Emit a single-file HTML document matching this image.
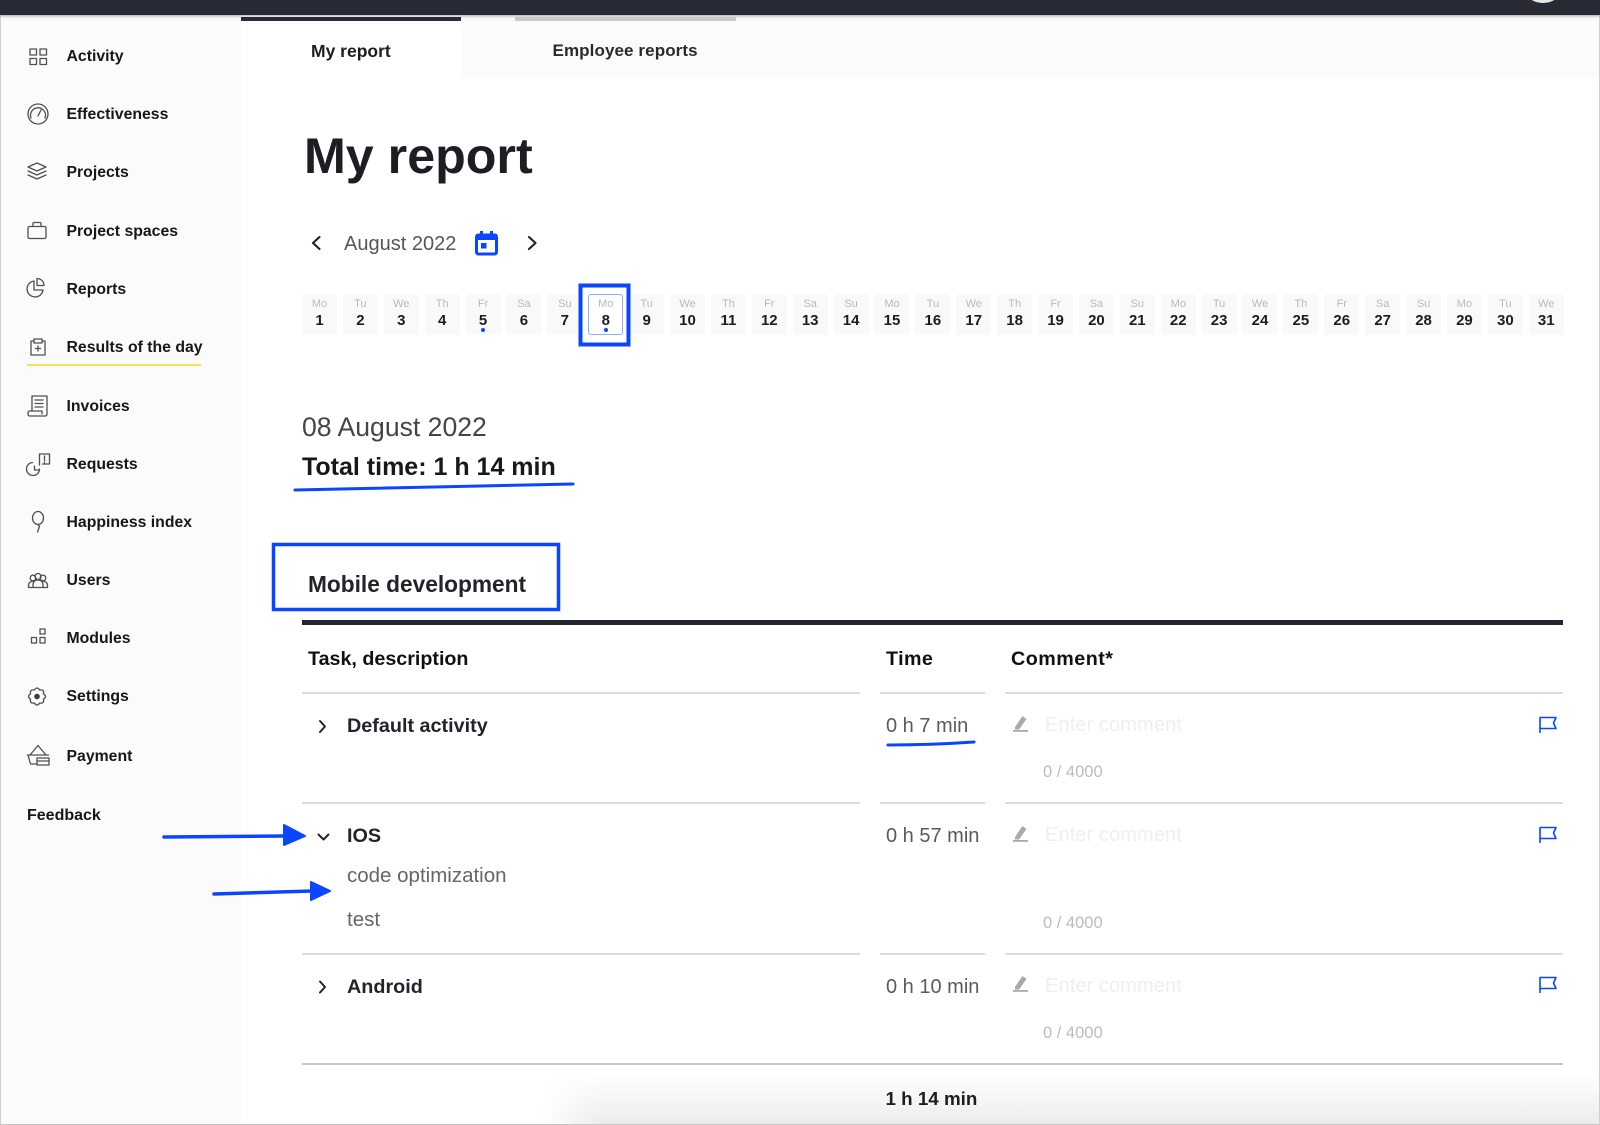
<!DOCTYPE html>
<html lang="en"><head><meta charset="utf-8"><title>My report</title>
<style>
*{box-sizing:border-box}
html,body{margin:0;padding:0;width:1600px;height:1125px;overflow:hidden;background:#fff;font-family:"Liberation Sans",sans-serif;color:#1c1d22}
.a{position:absolute;white-space:nowrap;height:24px;line-height:24px}
.b{font-weight:bold}
.box{position:absolute}
.nav{left:66.5px;font-size:15.8px;font-weight:bold;color:#16171b;margin-top:2px}
.ln{position:absolute;height:2px;background:#dcdcdc}
.th{font-size:19.7px;font-weight:bold;color:#111;margin-top:1px}
.tn{font-size:19.8px;font-weight:bold;color:#23242b;left:347px}
.tm{font-size:20px;color:#5a5a5e;left:886px}
.ec{font-size:20.2px;color:#efefef;left:1045px}
.cn{font-size:16.5px;color:#bcbcbc;left:1043px}
.sub{font-size:20.5px;color:#66666a;left:347px;margin-top:1px}
#cal{position:absolute;left:302px;top:294px;display:flex;gap:5.9px}
#cal div{position:relative;width:35px;height:41px;background:#f9f9f9;border-radius:3px;text-align:center}
#cal i{display:block;font-style:normal;font-size:11px;line-height:12px;color:#b9b9b9;padding-top:4px}
#cal b{display:block;font-size:15px;line-height:17px;color:#1c1d22;margin-top:2px}
#cal u{position:absolute;left:15.5px;top:34px;width:4px;height:4px;border-radius:50%;background:#0a46ff}
#cal .s{background:#fff;border:1px solid #8fabff}
#cal .s i{padding-top:3px}
#cal .s u{left:14.5px;top:33px}
</style></head>
<body>
<div class="box" style="left:0;top:15px;width:241px;height:1110px;background:#fbfbfb"></div>
<div class="box" style="left:461px;top:15px;width:1139px;height:63px;background:#fbfbfb"></div>
<div class="box" style="left:0;top:0;width:1px;height:1125px;background:#cfcfcf"></div>
<div class="box" style="left:540px;top:1072px;width:1060px;height:53px;background:linear-gradient(#fff,#ececec);-webkit-mask-image:linear-gradient(90deg,transparent,#000 60px)"></div>
<div class="box" style="left:0;top:1124px;width:1600px;height:1px;background:#c4c4c4"></div>
<div class="box" style="left:1599px;top:15px;width:1px;height:1110px;background:#d0d0d0"></div>
<div class="box" style="left:0;top:0;width:1600px;height:15px;background:#282b36;box-shadow:0 1px 3px rgba(0,0,0,.35)"></div>
<div class="box" style="left:1529px;top:-12px;width:28px;height:15px;border-radius:50%;background:#e6e6e6"></div>
<div class="box" style="left:241px;top:17px;width:220px;height:4px;background:#282b36"></div>
<div class="box" style="left:515px;top:17px;width:221px;height:4px;background:#c9c9c9"></div>

<div class="a" style="left:311px;top:39px;font-size:17.5px;font-weight:bold;color:#1c1d22">My report</div>
<div class="a" style="left:552.500px;top:39px;font-size:17px;font-weight:bold;color:#2a2b30;letter-spacing:.1px">Employee reports</div>

<div class="a nav" style="top:43px">Activity</div>
<div class="a nav" style="top:101px">Effectiveness</div>
<div class="a nav" style="top:159px">Projects</div>
<div class="a nav" style="top:218px">Project spaces</div>
<div class="a nav" style="top:276px">Reports</div>
<div class="a nav" style="top:334px">Results of the day</div>
<div class="a nav" style="top:393px">Invoices</div>
<div class="a nav" style="top:451px">Requests</div>
<div class="a nav" style="top:509px">Happiness index</div>
<div class="a nav" style="top:567px">Users</div>
<div class="a nav" style="top:625px">Modules</div>
<div class="a nav" style="top:683px">Settings</div>
<div class="a nav" style="top:743px">Payment</div>
<div class="a nav" style="top:802px;left:27px;font-size:16px">Feedback</div>
<div class="box" style="left:27px;top:364px;width:174px;height:2px;background:#ffe14f"></div>

<div class="a b" style="left:304px;top:131px;height:50px;line-height:50px;font-size:50.200px;color:#1d1e23">My report</div>
<div class="a" style="left:344px;top:232px;font-size:20px;color:#55565a">August 2022</div>

<div id="cal">
<div><i>Mo</i><b>1</b></div><div><i>Tu</i><b>2</b></div><div><i>We</i><b>3</b></div><div><i>Th</i><b>4</b></div><div><i>Fr</i><b>5</b><u></u></div><div><i>Sa</i><b>6</b></div><div><i>Su</i><b>7</b></div>
<div class="s"><i>Mo</i><b>8</b><u></u></div><div><i>Tu</i><b>9</b></div><div><i>We</i><b>10</b></div><div><i>Th</i><b>11</b></div><div><i>Fr</i><b>12</b></div><div><i>Sa</i><b>13</b></div><div><i>Su</i><b>14</b></div>
<div><i>Mo</i><b>15</b></div><div><i>Tu</i><b>16</b></div><div><i>We</i><b>17</b></div><div><i>Th</i><b>18</b></div><div><i>Fr</i><b>19</b></div><div><i>Sa</i><b>20</b></div><div><i>Su</i><b>21</b></div>
<div><i>Mo</i><b>22</b></div><div><i>Tu</i><b>23</b></div><div><i>We</i><b>24</b></div><div><i>Th</i><b>25</b></div><div><i>Fr</i><b>26</b></div><div><i>Sa</i><b>27</b></div><div><i>Su</i><b>28</b></div>
<div><i>Mo</i><b>29</b></div><div><i>Tu</i><b>30</b></div><div><i>We</i><b>31</b></div>
</div>

<div class="a" style="left:302px;top:415px;font-size:26.600px;color:#444549">08 August 2022</div>
<div class="a b" style="left:302px;top:454.500px;font-size:25px;color:#17181c">Total time: 1 h 14 min</div>
<div class="a b" style="left:308px;top:572px;font-size:22.700px;color:#23242a">Mobile development</div>

<div class="box" style="left:302px;top:620px;width:1261px;height:5px;background:#23252e"></div>
<div class="a th" style="left:308px;top:646px">Task, description</div>
<div class="a th" style="left:886px;top:646px;letter-spacing:.4px">Time</div>
<div class="a th" style="left:1011px;top:646px;letter-spacing:.5px">Comment*</div>

<div class="ln" style="left:302px;top:692px;width:558px"></div>
<div class="ln" style="left:880px;top:692px;width:105px"></div>
<div class="ln" style="left:1005px;top:692px;width:558px"></div>
<div class="ln" style="left:302px;top:802px;width:558px"></div>
<div class="ln" style="left:880px;top:802px;width:105px"></div>
<div class="ln" style="left:1005px;top:802px;width:558px"></div>
<div class="ln" style="left:302px;top:953px;width:558px"></div>
<div class="ln" style="left:880px;top:953px;width:105px"></div>
<div class="ln" style="left:1005px;top:953px;width:558px"></div>
<div class="ln" style="left:302px;top:1063px;width:1261px;background:#c8c8c8"></div>

<div class="a tn" style="top:714px">Default activity</div>
<div class="a tm" style="top:714px">0 h 7 min</div>
<div class="a ec" style="top:713px">Enter comment</div>
<div class="a cn" style="top:760px">0 / 4000</div>

<div class="a tn" style="top:824px">IOS</div>
<div class="a tm" style="top:824px">0 h 57 min</div>
<div class="a ec" style="top:823px">Enter comment</div>
<div class="a cn" style="top:911px">0 / 4000</div>
<div class="a sub" style="top:863px">code optimization</div>
<div class="a sub" style="top:907px">test</div>

<div class="a tn" style="top:975px">Android</div>
<div class="a tm" style="top:975px">0 h 10 min</div>
<div class="a ec" style="top:974px">Enter comment</div>
<div class="a cn" style="top:1021px">0 / 4000</div>
<div class="a b" style="left:885.500px;top:1087px;font-size:18.800px;color:#1c1d22">1 h 14 min</div>

<svg class="box" style="left:0;top:0" width="1600" height="1125" viewBox="0 0 1600 1125" fill="none">
<g stroke="#4e4f54" stroke-width="1.300" stroke-linejoin="round" stroke-linecap="round">
<rect x="30" y="49" width="6.500" height="6"/><rect x="40" y="49" width="6.500" height="6"/><rect x="30" y="58.500" width="6.500" height="6"/><rect x="40" y="58.500" width="6.500" height="6"/>
<circle cx="38" cy="114" r="10"/><path d="M31 118a7.500 7.500 0 1 1 14 0M38 116l3-6"/>
<path d="M37 163l9 4-9 4-9-4zM28 171l9 4 9-4M28 175l9 4 9-4"/>
<rect x="28" y="226.500" width="18" height="12" rx="1.500"/><path d="M33 226v-2.500q0-1 1-1h6q1 0 1 1v2.500"/>
<path d="M34 281a8 8 0 1 0 9 9h-9zM37 278.500a7 7 0 0 1 7 7h-7z"/>
<g transform="translate(0,-2)"><path d="M34 343h-3v14h14v-14h-3M34 341h8v4h-8zM38 348v5M35.500 350.500h5"/></g>
<path d="M32 411v-15h15v18q0 2-2 2H30q-2 0-2-2v-1q0-2 2-2h12v3M35 400h8M35 403.500h8M35 407h8"/>
<g transform="translate(1.500,0)"><path d="M38 469a6.500 6.500 0 1 1-7-6.500M33 466v4h4M38 465v-11h10v10h-7"/><path d="M43 456v5M43 462.500v.5"/></g>
<ellipse cx="38" cy="518" rx="5.500" ry="6.500"/><path d="M38 524.500l1.500 2-2 5.500"/>
<path d="M28.500 587.500v-2q0-4 5-4.500M47.500 587.500v-2q0-4-5-4.500M28.500 587.500h19M33 587v-2q0-5 5-5t5 5v2"/><circle cx="33" cy="578" r="2.800"/><circle cx="38" cy="576.500" r="3"/><circle cx="43" cy="578" r="2.800"/>
<rect x="31.500" y="637.500" width="5" height="5.500"/><rect x="40" y="637.500" width="5" height="5.500"/><rect x="40" y="629" width="5" height="5"/>
<path d="M43.470 693.820Q47.500 696.500 43.470 699.180Q44.400 703.900 39.680 702.970Q37 707 34.320 702.970Q29.600 703.900 30.530 699.180Q26.500 696.500 30.530 693.820Q29.600 689.100 34.320 690.030Q37 686 39.680 690.030Q44.400 689.100 43.470 693.820Z"/>
<path d="M30 755l8-9.500 8 9.500M27.500 755h21M28 755l2.500 9H37"/><rect x="37" y="758" width="12" height="7"/><path d="M37 761h12"/>
</g>
<circle cx="37" cy="696.500" r="2.800" fill="#3a3b40"/>

<g stroke="#23242b" stroke-width="2.200" stroke-linecap="round" stroke-linejoin="round">
<path d="M319.500 237l-6.500 6 6.500 6"/><path d="M529 237l6.500 6-6.500 6"/>
</g>
<g stroke="#23242b" stroke-width="2" stroke-linecap="round" stroke-linejoin="round">
<path d="M320 721l5 5.500-5 5.500"/><path d="M318.500 834.500l5 5 5-5"/><path d="M320 981.500l5 5.500-5 5.500"/>
</g>

<rect x="476.500" y="235" width="20" height="19" rx="2" stroke="#0a46ff" stroke-width="3"/>
<path d="M476 234h21v6h-21zM480 231h3v5h-3zM490 231h3v5h-3z" fill="#0a46ff"/>
<rect x="481" y="243" width="5.500" height="5.500" fill="#0a46ff"/>

<rect x="580.500" y="285.500" width="48" height="59" stroke="#0a46ff" stroke-width="4"/>
<path d="M295 490Q420 487 573 484" stroke="#0a46ff" stroke-width="3" stroke-linecap="round"/>
<rect x="273.500" y="544.500" width="285" height="65" stroke="#0a46ff" stroke-width="3.500"/>
<path d="M888 745Q930 745 974 742" stroke="#0a46ff" stroke-width="3" stroke-linecap="round"/>

<path d="M164 837L286 836" stroke="#0a46ff" stroke-width="3.500" stroke-linecap="round"/>
<path d="M284 825L305 836 284 845z" fill="#0a46ff" stroke="#0a46ff" stroke-width="2" stroke-linejoin="round"/>
<path d="M214 894L312 891" stroke="#0a46ff" stroke-width="3.500" stroke-linecap="round"/>
<path d="M311 882L330 891 311 900z" fill="#0a46ff" stroke="#0a46ff" stroke-width="2" stroke-linejoin="round"/>

<g fill="#a9a9a9">
<path d="M1015 727l7.500-11 4 3-7.500 10.500h-4z"/><rect x="1013" y="730" width="15" height="1.800"/>
<path d="M1015 837l7.500-11 4 3-7.500 10.500h-4z"/><rect x="1013" y="840" width="15" height="1.800"/>
<path d="M1015 987l7.500-11 4 3-7.500 10.500h-4z"/><rect x="1013" y="990" width="15" height="1.800"/>
</g>
<g stroke="#0a46ff" stroke-width="1.600" stroke-linejoin="round">
<path d="M1540 733v-15.500h16l-2.500 5.500 2.500 5.500h-16"/>
<path d="M1540 843v-15.500h16l-2.500 5.500 2.500 5.500h-16"/>
<path d="M1540 993v-15.500h16l-2.500 5.500 2.500 5.500h-16"/>
</g>
</svg>
</body></html>
